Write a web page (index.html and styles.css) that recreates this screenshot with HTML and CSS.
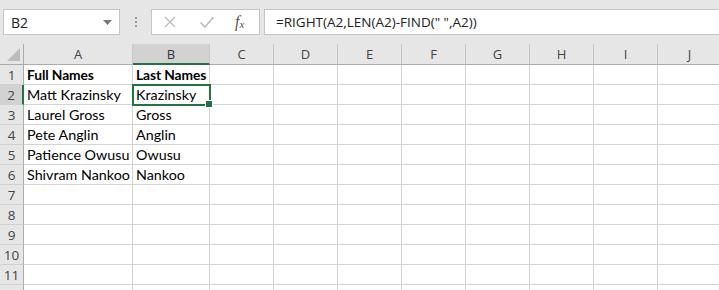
FILE: index.html
```html
<!DOCTYPE html>
<html>
<head>
<meta charset="utf-8">
<link rel="stylesheet" href="styles.css">
</head>
<body>
<div class="app">
  <div class="toolbar">
    <div class="namebox">
      <span class="namebox-text">B2</span>
      <svg class="dropdown" width="9" height="5" viewBox="0 0 9 5"><path d="M0 0 H9 L4.5 5 Z" fill="#7a7a7a"/></svg>
    </div>
    <div class="grip"><span></span><span></span><span></span></div>
    <div class="fnbox">
      <svg class="icon" width="14" height="14" viewBox="0 0 14 14"><path d="M2 2 L12 12 M12 2 L2 12" stroke="#bdbdbd" stroke-width="1.4" fill="none"/></svg>
      <svg class="icon" width="16" height="14" viewBox="0 0 16 14"><path d="M1.5 7.5 L6 12 L14.5 2" stroke="#bdbdbd" stroke-width="1.6" fill="none"/></svg>
      <span class="fx">f<sub>x</sub></span>
    </div>
    <div class="formula">=RIGHT(A2,LEN(A2)-FIND(" ",A2))</div>
  </div>
  <div class="sheet">
    <div class="corner"><svg width="13" height="13" viewBox="0 0 13 13"><path d="M13 0 V13 H0 Z" fill="#bcbcbc"/></svg></div>
    <div class="colhead">A</div>
    <div class="colhead sel">B</div>
    <div class="colhead">C</div>
    <div class="colhead">D</div>
    <div class="colhead">E</div>
    <div class="colhead">F</div>
    <div class="colhead">G</div>
    <div class="colhead">H</div>
    <div class="colhead">I</div>
    <div class="colhead">J</div>

    <div class="rowhead">1</div><div class="cell bold">Full Names</div><div class="cell bold">Last Names</div><div class="cell"></div><div class="cell"></div><div class="cell"></div><div class="cell"></div><div class="cell"></div><div class="cell"></div><div class="cell"></div><div class="cell"></div>
    <div class="rowhead sel">2</div><div class="cell">Matt Krazinsky</div><div class="cell active">Krazinsky<span class="handle"></span></div><div class="cell"></div><div class="cell"></div><div class="cell"></div><div class="cell"></div><div class="cell"></div><div class="cell"></div><div class="cell"></div><div class="cell"></div>
    <div class="rowhead">3</div><div class="cell">Laurel Gross</div><div class="cell">Gross</div><div class="cell"></div><div class="cell"></div><div class="cell"></div><div class="cell"></div><div class="cell"></div><div class="cell"></div><div class="cell"></div><div class="cell"></div>
    <div class="rowhead">4</div><div class="cell">Pete Anglin</div><div class="cell">Anglin</div><div class="cell"></div><div class="cell"></div><div class="cell"></div><div class="cell"></div><div class="cell"></div><div class="cell"></div><div class="cell"></div><div class="cell"></div>
    <div class="rowhead">5</div><div class="cell">Patience Owusu</div><div class="cell">Owusu</div><div class="cell"></div><div class="cell"></div><div class="cell"></div><div class="cell"></div><div class="cell"></div><div class="cell"></div><div class="cell"></div><div class="cell"></div>
    <div class="rowhead">6</div><div class="cell">Shivram Nankoo</div><div class="cell">Nankoo</div><div class="cell"></div><div class="cell"></div><div class="cell"></div><div class="cell"></div><div class="cell"></div><div class="cell"></div><div class="cell"></div><div class="cell"></div>
    <div class="rowhead">7</div><div class="cell"></div><div class="cell"></div><div class="cell"></div><div class="cell"></div><div class="cell"></div><div class="cell"></div><div class="cell"></div><div class="cell"></div><div class="cell"></div><div class="cell"></div>
    <div class="rowhead">8</div><div class="cell"></div><div class="cell"></div><div class="cell"></div><div class="cell"></div><div class="cell"></div><div class="cell"></div><div class="cell"></div><div class="cell"></div><div class="cell"></div><div class="cell"></div>
    <div class="rowhead">9</div><div class="cell"></div><div class="cell"></div><div class="cell"></div><div class="cell"></div><div class="cell"></div><div class="cell"></div><div class="cell"></div><div class="cell"></div><div class="cell"></div><div class="cell"></div>
    <div class="rowhead">10</div><div class="cell"></div><div class="cell"></div><div class="cell"></div><div class="cell"></div><div class="cell"></div><div class="cell"></div><div class="cell"></div><div class="cell"></div><div class="cell"></div><div class="cell"></div>
    <div class="rowhead">11</div><div class="cell"></div><div class="cell"></div><div class="cell"></div><div class="cell"></div><div class="cell"></div><div class="cell"></div><div class="cell"></div><div class="cell"></div><div class="cell"></div><div class="cell"></div>
    <div class="rowhead"></div><div class="cell"></div><div class="cell"></div><div class="cell"></div><div class="cell"></div><div class="cell"></div><div class="cell"></div><div class="cell"></div><div class="cell"></div><div class="cell"></div><div class="cell"></div>
  </div>
</div>
</body>
</html>
```
FILE: styles.css
```css
html, body {
  margin: 0;
  padding: 0;
  background: #ffffff;
  overflow: hidden;
}
.app {
  width: 719px;
  height: 290px;
  overflow: hidden;
  font-family: "Open Sans", "Noto Sans", sans-serif;
}
.toolbar {
  height: 44px;
  background: #e6e6e6;
  display: flex;
  align-items: flex-start;
  padding-top: 9px;
  box-sizing: border-box;
}
.namebox {
  margin-left: 3px;
  width: 117px;
  height: 26px;
  box-sizing: border-box;
  background: #fff;
  border: 1px solid #c6c6c6;
  display: flex;
  align-items: center;
  justify-content: space-between;
  padding: 0 7px 0 7px;
}
.namebox-text {
  font-size: 14px;
  color: #222;
  font-family: "Open Sans", sans-serif;
}
.dropdown { margin-top: 1px; }
.grip {
  width: 31px;
  height: 26px;
  display: flex;
  flex-direction: column;
  align-items: center;
  justify-content: center;
  gap: 2px;
}
.grip span {
  width: 2px;
  height: 2px;
  background: #9a9a9a;
}
.fnbox {
  width: 109px;
  height: 26px;
  box-sizing: border-box;
  background: #fff;
  border: 1px solid #c6c6c6;
  display: flex;
  align-items: center;
  padding-left: 11px;
}
.fnbox .icon:first-child { margin-right: 22px; }
.fnbox .icon:nth-child(2) { margin-right: 20px; }
.fx {
  font-family: "Liberation Serif", serif;
  font-style: italic;
  font-size: 16px;
  color: #555;
  line-height: 1;
}
.fx sub {
  font-size: 11px;
  vertical-align: -1px;
}
.formula {
  margin-left: 4px;
  flex: 1;
  height: 26px;
  box-sizing: border-box;
  background: #fff;
  border: 1px solid #c6c6c6;
  border-right: none;
  font-size: 13.5px;
  color: #222;
  display: flex;
  align-items: center;
  padding-left: 11px;
}
.sheet {
  display: grid;
  grid-template-columns: 24px 109px 77px repeat(8, 64px);
  grid-template-rows: 21px repeat(12, 20px);
}
.corner, .colhead, .rowhead, .cell {
  box-sizing: border-box;
  border-right: 1px solid #d4d4d4;
  border-bottom: 1px solid #d4d4d4;
}
.corner {
  background: #e6e6e6;
  border-bottom: 1px solid #ababab;
  border-right: 1px solid #ababab;
  display: flex;
  align-items: flex-end;
  justify-content: flex-end;
  padding: 0 3px 3px 0;
}
.colhead {
  background: #e6e6e6;
  border-bottom: 1px solid #ababab;
  border-right: 1px solid #c8c8c8;
  font-family: "Open Sans", sans-serif;
  font-size: 13px;
  color: #444;
  display: flex;
  align-items: center;
  justify-content: center;
}
.colhead.sel {
  background: #d2d2d2;
  border-bottom: 2px solid #217346;
  color: #333;
}
.rowhead {
  background: #e6e6e6;
  border-right: 1px solid #ababab;
  border-bottom: 1px solid #d0d0d0;
  font-family: "Open Sans", sans-serif;
  font-size: 13.5px;
  color: #444;
  display: flex;
  align-items: center;
  justify-content: center;
}
.rowhead.sel {
  background: #d2d2d2;
  border-right: 2px solid #217346;
}
.cell {
  font-family: "Lato", sans-serif;
  font-size: 14.3px;
  color: #000;
  display: flex;
  align-items: flex-end;
  padding: 0 0 0 3px;
  line-height: 18px;
  white-space: nowrap;
  position: relative;
}
.cell.bold {
  font-weight: bold;
  font-size: 13.8px;
  letter-spacing: -0.1px;
}
.cell.active {
  outline: 2px solid #217346;
  outline-offset: -1px;
  z-index: 2;
}
.handle {
  position: absolute;
  right: -4px;
  bottom: -4px;
  width: 6px;
  height: 6px;
  background: #217346;
  border: 1px solid #fff;
}
```
